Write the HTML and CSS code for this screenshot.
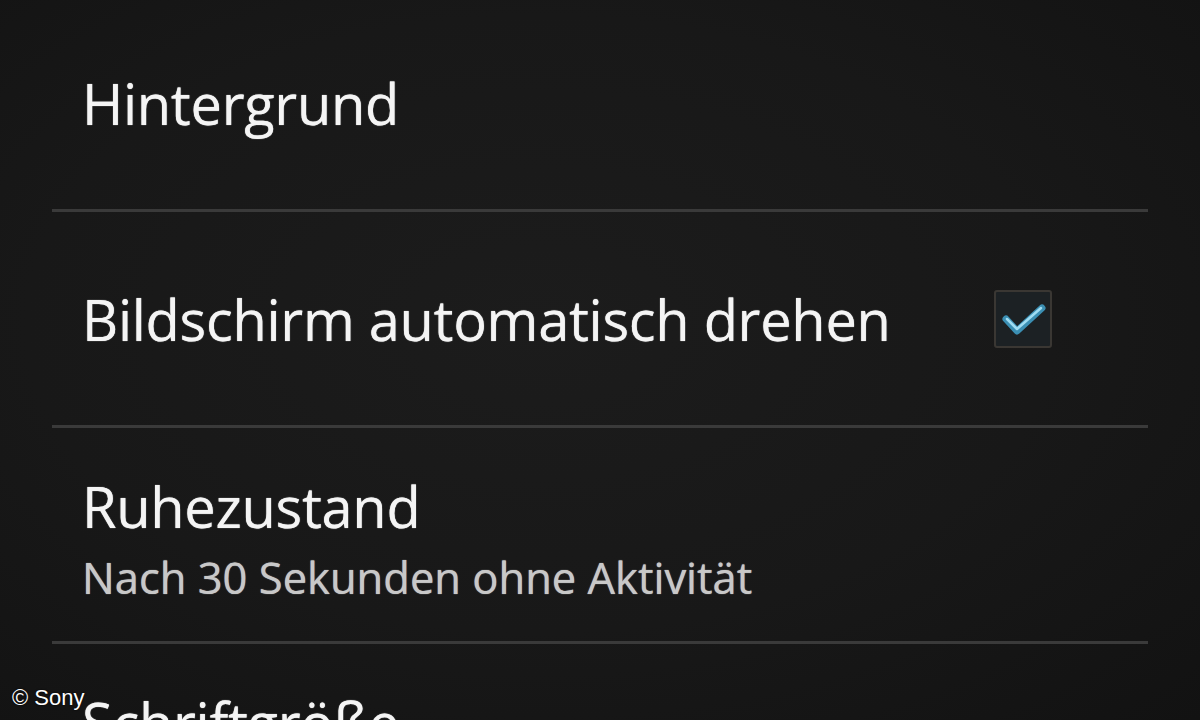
FILE: index.html
```html
<!DOCTYPE html>
<html lang="de">
<head>
  <meta charset="UTF-8">
  <meta name="viewport" content="width=device-width, initial-scale=1.0">
  <title>Display-Einstellungen</title>
  <link rel="stylesheet" href="styles.css">
</head>
<body>

  <div class="screen">
    <!-- Settings list -->
    <ul class="settings">
      <li class="setting">
        <div class="setting-text">
          <span class="setting-title">Hintergrund</span>
        </div>
      </li>

      <li class="setting">
        <div class="setting-text">
          <span class="setting-title">Bildschirm automatisch drehen</span>
        </div>
        <span class="checkbox checked">
          <svg viewBox="0 0 58 58" width="58" height="58">
            <path d="M12 29 L23 41 L48 18" fill="none" stroke="#3b8fb3" stroke-width="7" stroke-linecap="round" stroke-linejoin="round"/>
            <path d="M13 29 L23 39 L47 18" fill="none" stroke="#9fdcf2" stroke-width="2.5" stroke-linecap="round" stroke-linejoin="round"/>
          </svg>
        </span>
      </li>

      <li class="setting two-line">
        <div class="setting-text">
          <span class="setting-title">Ruhezustand</span>
          <span class="setting-summary">Nach 30 Sekunden ohne Aktivität</span>
        </div>
      </li>

      <li class="setting two-line">
        <div class="setting-text">
          <span class="setting-title">Schriftgröße</span>
          <span class="setting-summary">Normal</span>
        </div>
      </li>
    </ul>

    <!-- Image credit -->
    <span class="credit">© Sony</span>
  </div>

</body>
</html>
```

FILE: styles.css
```css
/* Global Styles */
body {
  margin: 0;
  padding: 0;
  background-color: #151515;
  color: #f2f2f2;
  font-family: "Open Sans", "Noto Sans", sans-serif;
  overflow: hidden;
}

.screen {
  position: relative;
  width: 1200px;
  height: 720px;
  overflow: hidden;
  background: radial-gradient(ellipse at 45% 45%, #1c1c1c 0%, #181818 55%, #121212 100%);
}

/* Settings list */
.settings {
  list-style: none;
  margin: -4px 52px 0 52px;
  padding: 0;
}

.setting {
  display: flex;
  align-items: center;
  justify-content: space-between;
  height: 213px;
  padding: 0 96px 0 30px;
  border-bottom: 3px solid #3a3a3a;
}

.setting-text {
  display: flex;
  flex-direction: column;
}

.setting-title {
  font-size: 56px;
  line-height: 86px;
  letter-spacing: -0.3px;
  color: #f4f4f4;
  text-shadow: 0 0 1px #f4f4f4;
}

.setting:not(.two-line) .setting-title {
  line-height: 80px;
}

.setting-summary {
  font-size: 43.5px;
  line-height: 58px;
  color: #c8c8c8;
  text-shadow: 0 0 1px #c8c8c8;
}

/* Checkbox */
.checkbox {
  display: block;
  width: 58px;
  height: 58px;
  box-sizing: border-box;
  border: 2px solid #3a3733;
  border-radius: 3px;
  background-color: #1c2124;
}

.checkbox svg {
  display: block;
  margin: -2px;
}

/* Credit overlay */
.credit {
  position: absolute;
  left: 12px;
  bottom: 9px;
  font-family: "Liberation Sans", Arial, sans-serif;
  font-size: 22px;
  color: #ffffff;
  text-shadow: 0 0 2px #000000;
}
```
